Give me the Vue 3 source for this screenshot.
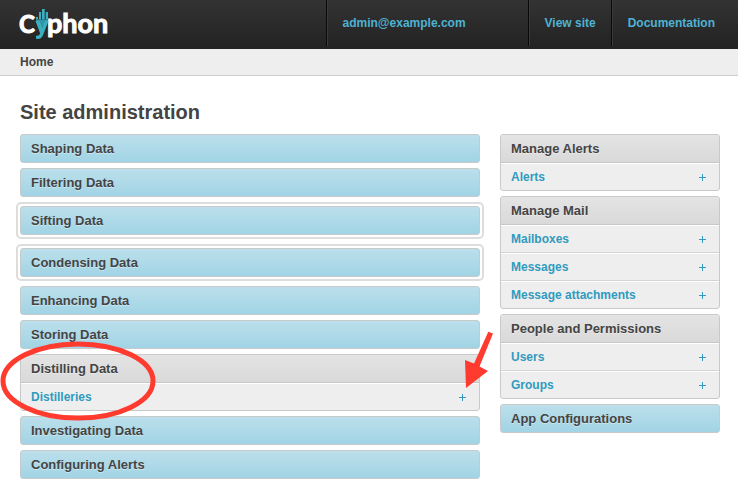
<script setup>
const mainGroups = [
  { name: 'Shaping Data' },
  { name: 'Filtering Data' },
  { name: 'Sifting Data', nested: true },
  { name: 'Condensing Data', nested: true },
  { name: 'Enhancing Data' },
  { name: 'Storing Data' },
  { name: 'Distilling Data', items: ['Distilleries'], marked: true },
  { name: 'Investigating Data' },
  { name: 'Configuring Alerts' },
]
const sideGroups = [
  { name: 'Manage Alerts', items: ['Alerts'] },
  { name: 'Manage Mail', items: ['Mailboxes', 'Messages', 'Message attachments'] },
  { name: 'People and Permissions', items: ['Users', 'Groups'] },
  { name: 'App Configurations' },
]
const columns = [
  { id: 'main', groups: mainGroups },
  { id: 'side', groups: sideGroups },
]
</script>

<template>
  <div class="page">
    <header class="header">
      <a class="logo" href="#" aria-label="Cyphon">
        <svg width="92" height="34" viewBox="0 0 92 34" aria-hidden="true">
          <text class="wordmark initial" x="-1" y="26">C</text>
          <text class="wordmark" x="27" y="26">phon</text>
          <path class="bar" d="M16 10h2v2.500h-2zM19 5h2v7.500h-2zM22 2h2.700v10.500H22zM25.700 5H28v7.500h-2.300z" />
          <path class="y-shape" d="M15.500 14h13l-5.500 14q-1.500 4-5 4l-2-.3v-3q4 .3 4-2.700z" />
          <path class="y-fold" d="M16 12.500h12v1.500H16zM19.500 14h5.500l-2.500 8z" />
        </svg>
      </a>
      <nav class="nav" aria-label="User tools">
        <a class="nav-link user" href="#">admin@example.com</a>
        <a class="nav-link" href="#">View site</a>
        <a class="nav-link last" href="#">Documentation</a>
      </nav>
    </header>
    <nav class="breadcrumbs" aria-label="Breadcrumbs">Home</nav>

    <main class="content">
      <h1>Site administration</h1>
      <div class="columns">
        <div v-for="col in columns" :key="col.id" class="column" :class="col.id">
          <div v-for="g in col.groups" :key="g.name" class="slot" :class="{ nested: g.nested }">
            <section class="group" :class="{ open: g.items }">
              <h2><button type="button">{{ g.name }}</button></h2>
              <ul v-if="g.items">
                <li v-for="item in g.items" :key="item">
                  <a class="model" href="#">{{ item }}</a>
                  <a class="add" href="#" :aria-label="'Add ' + item">
                    <svg width="7" height="7" viewBox="0 0 7 7"><path d="M3 0h1v3h3v1H4v3H3V4H0V3h3z" /></svg>
                  </a>
                </li>
              </ul>
            </section>
            <template v-if="g.marked">
              <svg class="ring" width="156" height="82" viewBox="0 0 156 82" aria-hidden="true">
                <ellipse cx="78" cy="40" rx="75" ry="37" />
              </svg>
              <svg class="arrow" width="30" height="60" viewBox="0 0 30 60" aria-hidden="true">
                <path d="M24.300 2.700L29 4.500 15.500 37.500 24 42 2 59 1 31 10 34.500z" />
              </svg>
            </template>
          </div>
        </div>
      </div>
    </main>
  </div>
</template>

<style>
body {
  margin: 0;
  background: #fff;
}
</style>

<style scoped>
.page {
  font-family: "Liberation Sans", Arial, sans-serif;
  font-size: 12px;
  font-weight: 700;
  color: #444;
}
a {
  color: #309bbf;
  text-decoration: none;
}
.header {
  display: flex;
  justify-content: space-between;
  height: 49px;
  background: linear-gradient(#333, #222);
}
.logo {
  padding: 7px 0 0 20px;
}
.logo svg {
  display: block;
  overflow: visible;
}
.wordmark {
  font-family: Lato, "Noto Sans", sans-serif;
  font-size: 27px;
  font-weight: 700;
  fill: #fff;
  stroke: #fff;
  stroke-width: 1px;
}
.wordmark.initial {
  font-size: 24px;
}
.bar,
.y-shape {
  fill: #3aafc0;
}
.y-fold {
  fill: #2f98a8;
}
.nav {
  display: flex;
}
.nav-link {
  box-sizing: border-box;
  height: 46px;
  padding: 0 15px 0 16px;
  border-left: 1px solid #0a0a0a;
  box-shadow: inset 1px 0 #3a3a3a;
  line-height: 46px;
  color: #4fb2d3;
}
.nav-link.user {
  width: 202px;
}
.nav-link.last {
  padding-right: 23px;
}
.breadcrumbs {
  padding: 0 20px;
  border-bottom: 1px solid #ccc;
  background: #eee;
  line-height: 26px;
}
.content {
  padding: 24px 18px 20px 20px;
}
h1 {
  margin: 0 0 10px;
  font-size: 20px;
  line-height: 24px;
}
.columns {
  display: flex;
  align-items: flex-start;
  gap: 20px;
}
.column {
  display: flex;
  flex-direction: column;
  gap: 5px;
}
.main {
  flex: 1;
}
.side {
  flex: 0 0 220px;
}
.slot {
  position: relative;
}
.nested {
  margin: 0 -4px;
  padding: 2px;
  border: 2px solid #ddd;
  border-radius: 5px;
}
.group {
  overflow: hidden;
  border: 1px solid #c7cacb;
  border-radius: 3px;
  background: linear-gradient(#bcdfeb, #a1d4e5);
}
.group.open {
  background: #eee;
}
h2 {
  margin: 0;
  font-size: 13px;
}
h2 button {
  display: block;
  width: 100%;
  padding: 0 10px;
  border: 0;
  background: none;
  font: inherit;
  line-height: 27px;
  text-align: left;
  color: #444;
  text-shadow: 0 1px rgba(255, 255, 255, 0.4);
}
.open h2 {
  border-bottom: 1px solid #c7c7c7;
  background: linear-gradient(#e4e4e4, #d9d9d9);
}
ul {
  margin: 0;
  padding: 0;
  list-style: none;
}
li {
  display: flex;
  align-items: center;
  justify-content: space-between;
  padding: 0 13px 0 10px;
  border-top: 1px solid #fff;
  line-height: 26px;
}
li + li {
  box-shadow: 0 -1px #d4d4d4;
  margin-top: 1px;
}
.add {
  display: flex;
}
.add path {
  fill: #309bbf;
}
.ring,
.arrow {
  position: absolute;
  z-index: 1;
  pointer-events: none;
}
.ring {
  left: -20px;
  top: -13px;
}
.arrow {
  right: -14px;
  top: -25px;
}
.ring ellipse {
  fill: none;
  stroke: #ff3b2f;
  stroke-width: 5;
}
.arrow path {
  fill: #ff3b2f;
}
</style>
